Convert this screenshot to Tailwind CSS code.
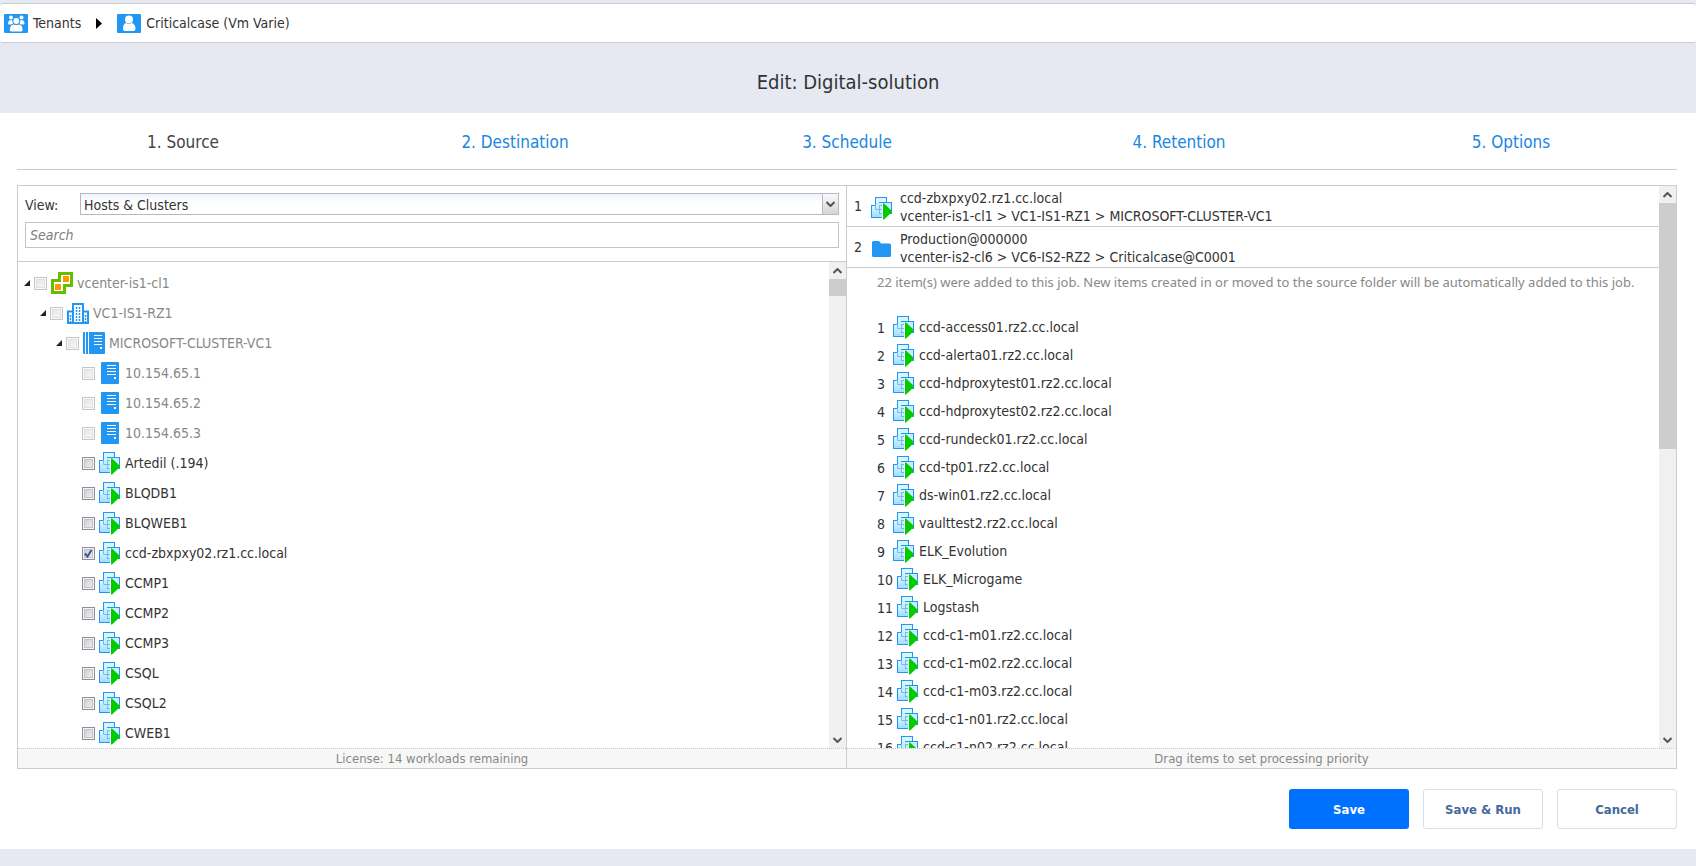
<!DOCTYPE html>
<html lang="en">
<head>
<meta charset="utf-8">
<meta name="viewport" content="width=device-width, initial-scale=1">
<title>Edit: Digital-solution</title>
<script src="https://cdn.jsdelivr.net/npm/@tailwindcss/browser@4"></script>
</head>
<body class="flex h-screen min-h-[500px] flex-col bg-[#e6e9f2] font-['DejaVu_Sans_Condensed','DejaVu_Sans',sans-serif] text-sm text-[#333]">

<svg width="0" height="0" class="absolute" aria-hidden="true">
  <defs>
    <linearGradient id="sky" x1="0" y1="0" x2="0" y2="1"><stop offset="0" stop-color="#e2f8ff"/><stop offset="1" stop-color="#9edbff"/></linearGradient>
    <symbol id="vm" viewBox="0 0 22 23">
      <rect x="4.500" y=".500" width="11" height="12" fill="#d8f6ff" stroke="#2196f3"/>
      <rect x=".500" y="8.500" width="12" height="12" fill="url(#sky)" stroke="#2196f3"/>
      <rect x="8.500" y="5.500" width="12" height="11" fill="#c9efff" stroke="#2196f3"/>
      <path d="M5 6h7v6H5zM9 9h3v7H9z" fill="#c9efff"/>
      <path d="M4.500 8V12.500H12M8.500 8V16.500H12M8.500 8.500H12" fill="none" stroke="#6fbdf0"/>
      <path d="M11 6.500V22.500H12.500V6.500Z" fill="#fff"/>
      <path d="M12 6.500H13L21 14V15L13 22.500H12Z" fill="#0c0"/>
    </symbol>
    <symbol id="vcenter" viewBox="0 0 22 22">
      <path d="M8.500 1.500H20.500V13.500H13.500V20.500H1.500V8.500H8.500Z" fill="#fff" stroke="#69bd00" stroke-width="3"/>
      <path d="M12 4h6v6h-6zM4 12h6v6H4z" fill="#ff9800"/>
    </symbol>
    <symbol id="datacenter" viewBox="0 0 22 21">
      <path d="M1 20V8.500H6M21 20V8.500H16" fill="#fff" stroke="#2196f3" stroke-width="2"/>
      <path d="M6 20V1H16V20" fill="#fff" stroke="#2196f3" stroke-width="2"/>
      <path d="M0 20h22" stroke="#2196f3" stroke-width="2"/>
      <path d="M9.500 4v14M12.500 4v14" stroke="#2196f3" stroke-width="1.500" stroke-dasharray="2 1"/>
      <path d="M3.500 12v7M18.500 12v7" stroke="#2196f3" stroke-width="1.500" stroke-dasharray="2 1"/>
    </symbol>
    <symbol id="cluster" viewBox="0 0 22 22">
      <path d="M1 0h1v22H1a1 1 0 0 1-1-1V1a1 1 0 0 1 1-1zM3 0h2v22H3zM6 0h15a1 1 0 0 1 1 1v20a1 1 0 0 1-1 1H6z" fill="#2196f3"/>
      <path d="M11 3.500h8M11 6.500h8M11 9.500h8M11 12.500h8" stroke="#fff"/>
      <path d="M17 15h2v2h-2z" fill="#fff"/>
    </symbol>
    <symbol id="server" viewBox="0 0 18 22">
      <rect width="18" height="22" rx="1" fill="#2196f3"/>
      <path d="M6 3.500h9M6 6.500h9M6 9.500h9M6 12.500h9" stroke="#fff"/>
      <path d="M13 15h2v2h-2z" fill="#fff"/>
    </symbol>
    <symbol id="folder" viewBox="0 0 19 16">
      <path d="M0 1.500A1.500 1.500 0 0 1 1.500 0H7l2 2.500h8.500A1.500 1.500 0 0 1 19 4v10.500a1.500 1.500 0 0 1-1.500 1.500h-16A1.500 1.500 0 0 1 0 14.500z" fill="#2196f3"/>
    </symbol>
    <symbol id="caret" viewBox="0 0 6 6"><path d="M6 0V6H0Z" fill="#222"/></symbol>
    <symbol id="up" viewBox="0 0 9 6"><path d="M.5 5L4.500 1L8.500 5" fill="none" stroke="#555" stroke-width="2"/></symbol>
    <symbol id="down" viewBox="0 0 9 6"><path d="M.5 1L4.500 5L8.500 1" fill="none" stroke="#555" stroke-width="2"/></symbol>
  </defs>
</svg>

<nav aria-label="Breadcrumb" class="mt-[3px] flex h-10 shrink-0 items-center rounded-[3px] border-y border-[#ccc] bg-white pl-1">
  <a href="#" class="flex items-center gap-[5px]">
    <svg width="24" height="19" viewBox="0 0 24 19"><rect width="24" height="19" rx="1" fill="#2196f3"/><g fill="#fff"><circle cx="7" cy="3.500" r="2"/><circle cx="17.500" cy="3.500" r="2"/><path d="M4 9.500C4 7 5.500 6 7.500 6l1.500 1v3.500H5q-1 0-1-1zM20.500 9.500c0-2.500-1.500-3.500-3.500-3.500l-1.500 1v3.500h4q1 0 1-1z"/></g><circle cx="12.300" cy="7" r="3.600" fill="#fff" stroke="#2196f3"/><path d="M5.500 15.500C5.500 12 7 10.500 9.500 10q2.800 1.500 5.500 0c2.500.5 4 2 4 5.500 0 2-1 2.500-2.500 2.500H8c-1.500 0-2.500-.5-2.500-2.500z" fill="#fff" stroke="#2196f3"/></svg>
    <span>Tenants</span>
  </a>
  <svg width="6" height="11" viewBox="0 0 6 11" class="mr-[15px] ml-[15px]"><path d="M0 0L6 5.500L0 11Z" fill="#000"/></svg>
  <a href="#" class="flex items-center gap-[5px]">
    <svg width="24" height="19" viewBox="0 0 24 19"><rect width="24" height="19" rx="1" fill="#2196f3"/><circle cx="12" cy="5.500" r="4" fill="#fff"/><path d="M6 14.500C6 11 7.500 9.500 9 9q3 2 6 0c1.500.5 3.500 2 3.500 5.500 0 2-1 2.500-2.500 2.500H8.500C7 17 6 16.500 6 14.500z" fill="#fff"/></svg>
    <span>Criticalcase (Vm Varie)</span>
  </a>
</nav>

<h1 class="flex h-[70px] shrink-0 items-center justify-center pt-2 text-xl">Edit: Digital-solution</h1>

<main class="mb-[17px] flex min-h-0 flex-1 flex-col bg-white pr-[19px] pb-5 pl-[17px]">
  <nav aria-label="Steps" class="grid h-[57px] shrink-0 grid-cols-5 items-center border-b border-[#ccc] pt-0.5 text-center text-[17px] text-[#1a86e2]">
    <a href="#" aria-current="step" class="text-[#444]">1. Source</a>
    <a href="#">2. Destination</a>
    <a href="#">3. Schedule</a>
    <a href="#">4. Retention</a>
    <a href="#">5. Options</a>
  </nav>

  <div class="mt-[15px] grid min-h-0 flex-1 grid-cols-2 grid-rows-[minmax(0,1fr)] border border-[#ccc]">
    <section aria-label="Source items" class="flex min-h-0 flex-col border-r border-[#ccc]">
      <div class="flex shrink-0 flex-col gap-[7px] border-b border-[#ccc] pt-[7px] pr-[7px] pb-[13px] pl-[7px]">
        <div class="flex h-[22px] items-center">
          <label for="view" class="w-[55px] shrink-0 pt-0.5">View:</label>
          <div class="relative h-full flex-1">
            <select id="view" class="h-full w-full appearance-none border border-[#b5b8c8] bg-linear-to-b from-[#eef3f8] to-white to-40% pt-px pl-[3px] leading-5"><option>Hosts &amp; Clusters</option></select>
            <span class="pointer-events-none absolute inset-y-px right-px flex w-4 items-center justify-center border-l border-[#b5b8c8] bg-linear-to-b from-[#fafafa] to-[#d5d5d5]"><svg width="9" height="6"><use href="#down"/></svg></span>
          </div>
        </div>
        <input type="text" aria-label="Search" placeholder="Search" class="h-[26px] w-full border border-[#c4c4c4] px-1 italic placeholder:text-[#808080]">
      </div>
      <div class="flex min-h-0 flex-1">
        <ul id="tree" class="min-w-0 flex-1 overflow-hidden pt-1.5 text-[#333]"></ul>
        <div class="flex w-[17px] shrink-0 flex-col bg-[#f0f0f0]">
          <button aria-label="Scroll up" class="flex h-[17px] items-center justify-center"><svg width="9" height="6"><use href="#up"/></svg></button>
          <div class="h-[17px] bg-[#cdcdcd]"></div>
          <button aria-label="Scroll down" class="mt-auto flex h-[17px] items-center justify-center"><svg width="9" height="6"><use href="#down"/></svg></button>
        </div>
      </div>
      <p class="h-5 shrink-0 border-t border-dotted border-[#ccc] bg-[#f7f7f7] text-center text-[13px] leading-[19px] text-[#888]">License: 14 workloads remaining</p>
    </section>

    <section aria-label="Selected items" class="flex min-h-0 flex-col">
      <div class="flex min-h-0 flex-1">
        <div class="min-w-0 flex-1 overflow-hidden">
          <div class="flex h-[41px] items-center border-b border-[#ccc] pl-[7px]">
            <span class="w-[17px]">1</span><svg width="22" height="23" class="mt-1"><use href="#vm"/></svg>
            <p class="ml-[7px] pt-0.5 leading-[18px] whitespace-nowrap">ccd-zbxpxy02.rz1.cc.local<br>vcenter-is1-cl1 &gt; VC1-IS1-RZ1 &gt; MICROSOFT-CLUSTER-VC1</p>
          </div>
          <div class="flex h-[41px] items-center border-b border-[#ccc] pl-[7px]">
            <span class="w-[18px]">2</span><svg width="19" height="16" class="mt-1"><use href="#folder"/></svg>
            <p class="ml-[9px] pt-0.5 leading-[18px] whitespace-nowrap">Production@000000<br>vcenter-is2-cl6 &gt; VC6-IS2-RZ2 &gt; Criticalcase@C0001</p>
          </div>
          <p class="mb-[17px] pl-[30px] font-['Noto_Sans',sans-serif] text-[13px] leading-7 whitespace-nowrap text-[#888]">22 item(s) were added to this job. New items created in or moved to the source folder will be automatically added to this job.</p>
          <ol id="items"></ol>
        </div>
        <div class="flex w-[17px] shrink-0 flex-col bg-[#f0f0f0]">
          <button aria-label="Scroll up" class="flex h-[17px] shrink-0 items-center justify-center"><svg width="9" height="6"><use href="#up"/></svg></button>
          <div class="h-[246px] bg-[#cdcdcd]"></div>
          <button aria-label="Scroll down" class="mt-auto flex h-[17px] shrink-0 items-center justify-center"><svg width="9" height="6"><use href="#down"/></svg></button>
        </div>
      </div>
      <p class="h-5 shrink-0 border-t border-dotted border-[#ccc] bg-[#f7f7f7] text-center text-[13px] leading-[19px] text-[#888]">Drag items to set processing priority</p>
    </section>
  </div>

  <div class="mt-5 flex shrink-0 justify-end gap-3.5 text-[13px] font-bold">
    <button class="h-10 w-[120px] rounded-[3px] bg-[#0071ff] pt-0.5 text-white">Save</button>
    <button class="h-10 w-[120px] rounded-[3px] border border-[#d5dfeb] pt-0.5 text-[#44699a]">Save &amp; Run</button>
    <button class="h-10 w-[120px] rounded-[3px] border border-[#d5dfeb] pt-0.5 text-[#44699a]">Cancel</button>
  </div>
</main>

<script>
// Indentation classes for each tree depth.
const indent = ['pl-1.5', 'pl-[22px]', 'pl-[38px]', 'pl-16'];
const icons = {
  vcenter: '<svg width="22" height="22" class="ml-1 mr-1 shrink-0"><use href="#vcenter"/></svg>',
  datacenter: '<svg width="22" height="21" class="ml-1 mr-1 shrink-0"><use href="#datacenter"/></svg>',
  cluster: '<svg width="22" height="22" class="ml-1 mr-1 shrink-0"><use href="#cluster"/></svg>',
  server: '<svg width="18" height="22" class="ml-1.5 mr-1.5 shrink-0"><use href="#server"/></svg>',
  vm: '<svg width="22" height="23" class="ml-1 mr-1 shrink-0"><use href="#vm"/></svg>'
};
const tree = [
  [0, 'vcenter', 'vcenter-is1-cl1'], [1, 'datacenter', 'VC1-IS1-RZ1'], [2, 'cluster', 'MICROSOFT-CLUSTER-VC1'],
  [3, 'server', '10.154.65.1'], [3, 'server', '10.154.65.2'], [3, 'server', '10.154.65.3'],
  [3, 'vm', 'Artedil (.194)'], [3, 'vm', 'BLQDB1'], [3, 'vm', 'BLQWEB1'], [3, 'vm', 'ccd-zbxpxy02.rz1.cc.local', true],
  [3, 'vm', 'CCMP1'], [3, 'vm', 'CCMP2'], [3, 'vm', 'CCMP3'], [3, 'vm', 'CSQL'], [3, 'vm', 'CSQL2'], [3, 'vm', 'CWEB1']
];
document.getElementById('tree').innerHTML = tree.map(([depth, icon, name, checked], i) => `
  <li class="flex h-[30px] items-center ${indent[depth]}">
    ${depth < 3 ? '<svg width="6" height="6" class="mr-1 shrink-0"><use href="#caret"/></svg>' : ''}
    <span class="relative flex size-[13px] shrink-0">
      <input id="n${i}" type="checkbox" ${checked ? 'checked' : ''} ${icon === 'vm' ? '' : 'disabled'} class="peer size-[13px] appearance-none border border-[#8e8f8f] bg-linear-to-br from-[#c4c9d2] to-[#f6f6f6] shadow-[inset_0_0_0_1px_#f4f4f4,inset_0_0_0_2px_#c0c4ca] disabled:opacity-50">
      <svg viewBox="0 0 13 13" class="pointer-events-none absolute inset-0 hidden size-[13px] peer-checked:block"><path d="M3 6.500L5.500 9.500L9.500 3" fill="none" stroke="#3b569c" stroke-width="2"/></svg>
    </span>
    <label for="n${i}" class="flex items-center ${icon === 'vm' ? '' : 'text-[#888]'}">${icons[icon]}${name}</label>
  </li>`).join('');

const items = ['ccd-access01.rz2.cc.local', 'ccd-alerta01.rz2.cc.local', 'ccd-hdproxytest01.rz2.cc.local', 'ccd-hdproxytest02.rz2.cc.local',
  'ccd-rundeck01.rz2.cc.local', 'ccd-tp01.rz2.cc.local', 'ds-win01.rz2.cc.local', 'vaulttest2.rz2.cc.local', 'ELK_Evolution',
  'ELK_Microgame', 'Logstash', 'ccd-c1-m01.rz2.cc.local', 'ccd-c1-m02.rz2.cc.local', 'ccd-c1-m03.rz2.cc.local',
  'ccd-c1-n01.rz2.cc.local', 'ccd-c1-n02.rz2.cc.local'];
document.getElementById('items').innerHTML = items.map((name, i) => `
  <li class="flex h-7 items-center pl-[30px]"><span class="pt-0.5">${i + 1}</span><svg width="22" height="23" class="${i < 9 ? 'ml-2' : 'ml-1'} mr-1 shrink-0"><use href="#vm"/></svg>${name}</li>`).join('');
</script>
</body>
</html>
